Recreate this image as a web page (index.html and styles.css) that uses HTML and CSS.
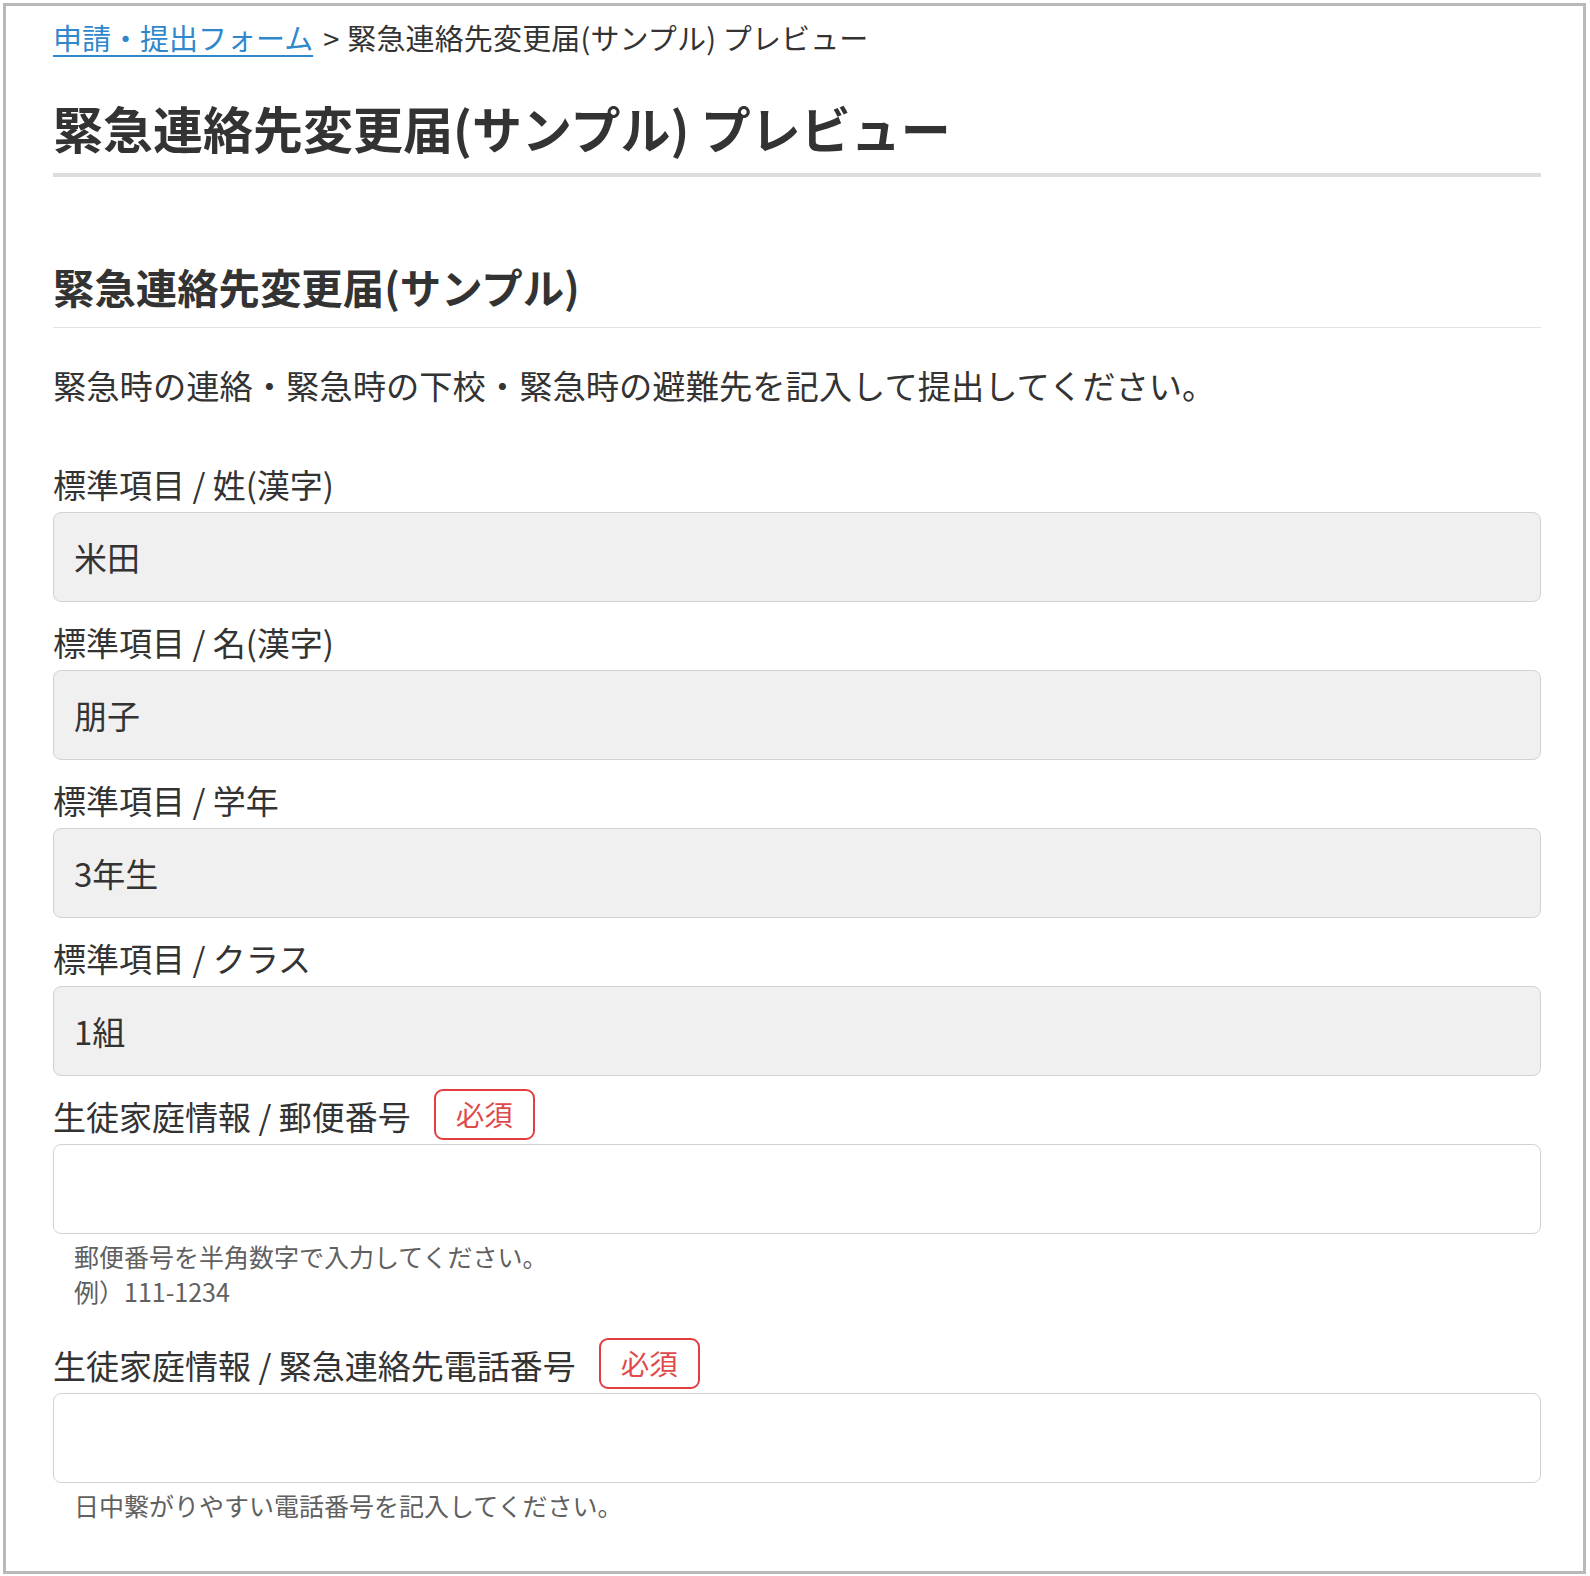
FILE: index.html
```html
<!DOCTYPE html>
<html lang="ja">
<head>
<meta charset="utf-8">
<title>緊急連絡先変更届(サンプル) プレビュー</title>
<link rel="stylesheet" href="styles.css">
</head>
<body>
<div class="frame">
  <div class="page">
    <nav class="breadcrumb"><a href="#" class="crumb-link">申請・提出フォーム</a><span class="crumb-sep">&gt;</span><span class="crumb-current">緊急連絡先変更届(サンプル) プレビュー</span></nav>
    <h1 class="page-title">緊急連絡先変更届(サンプル) プレビュー</h1>
    <h2 class="section-title">緊急連絡先変更届(サンプル)</h2>
    <p class="description">緊急時の連絡・緊急時の下校・緊急時の避難先を記入して提出してください。</p>
    <form class="form">
      <div class="field">
        <label class="label">標準項目 / 姓(漢字)</label>
        <input class="input input-filled" type="text" value="米田" readonly>
      </div>
      <div class="field">
        <label class="label">標準項目 / 名(漢字)</label>
        <input class="input input-filled" type="text" value="朋子" readonly>
      </div>
      <div class="field">
        <label class="label">標準項目 / 学年</label>
        <input class="input input-filled" type="text" value="3年生" readonly>
      </div>
      <div class="field">
        <label class="label">標準項目 / クラス</label>
        <input class="input input-filled" type="text" value="1組" readonly>
      </div>
      <div class="field">
        <label class="label">生徒家庭情報 / 郵便番号<span class="badge">必須</span></label>
        <input class="input" type="text">
        <div class="help">郵便番号を半角数字で入力してください。<br>例）111-1234</div>
      </div>
      <div class="field">
        <label class="label">生徒家庭情報 / 緊急連絡先電話番号<span class="badge">必須</span></label>
        <input class="input" type="text">
        <div class="help">日中繋がりやすい電話番号を記入してください。</div>
      </div>
    </form>
  </div>
</div>
</body>
</html>
```
FILE: styles.css
```css
html, body {
  margin: 0;
  padding: 0;
  background: #ffffff;
}

body {
  font-family: "Noto Sans CJK JP", "Noto Sans", sans-serif;
  color: #333333;
  padding: 3px;
}

.frame {
  box-sizing: border-box;
  width: 1583px;
  height: 1571px;
  border: 3px solid #b9b9b9;
  background: #ffffff;
}

.page {
  width: 1488px;
  padding: 11px 0 0 47px;
}

.breadcrumb {
  font-size: 29px;
  line-height: 41px;
  height: 41px;
  white-space: nowrap;
}

.crumb-link {
  color: #2f87cc;
  text-decoration: underline;
  text-underline-offset: 5px;
  text-decoration-thickness: 2px;
}

.crumb-sep {
  color: #333333;
  margin: 0 8px 0 10px;
}

.crumb-current {
  color: #333333;
  letter-spacing: 0.15px;
}

.page-title {
  margin: 42px 0 0;
  font-size: 50px;
  font-weight: 700;
  line-height: 55px;
  padding-bottom: 18px;
  border-bottom: 4px solid #dddddd;
}

.section-title {
  margin: 87px 0 0;
  font-size: 41.4px;
  font-weight: 700;
  line-height: 45px;
  padding-bottom: 18px;
  border-bottom: 1px solid #e3e3e3;
}

.description {
  margin: 33px 0 0;
  font-size: 33.3px;
  line-height: 47px;
}

.form {
  margin-top: 53px;
}

.field {
  display: flex;
  flex-direction: column;
  margin-bottom: 17px;
}

.label {
  display: flex;
  align-items: center;
  height: 47px;
  font-size: 33px;
  line-height: 47px;
  margin-bottom: 4px;
  white-space: nowrap;
}

.badge {
  box-sizing: border-box;
  display: inline-flex;
  align-items: center;
  justify-content: center;
  height: 51px;
  padding: 0 20px;
  margin-left: 23px;
  margin-bottom: 5px;
  border: 2px solid #e23d40;
  border-radius: 9px;
  color: #e04a4c;
  font-size: 28.5px;
  line-height: 1;
  background: #ffffff;
}

.input {
  -webkit-appearance: none;
  appearance: none;
  box-sizing: border-box;
  width: 100%;
  height: 90px;
  margin: 0;
  padding: 0 20px;
  border: 1px solid #d2d2d2;
  border-radius: 8px;
  background: #ffffff;
  font-family: "Noto Sans CJK JP", "Noto Sans", sans-serif;
  font-size: 33px;
  color: #333333;
  outline: none;
}

.input-filled {
  background: #f0f0f0;
}

.help {
  margin: 5px 0 16px;
  padding-left: 21px;
  font-size: 25px;
  line-height: 35px;
  color: #606060;
}
```
